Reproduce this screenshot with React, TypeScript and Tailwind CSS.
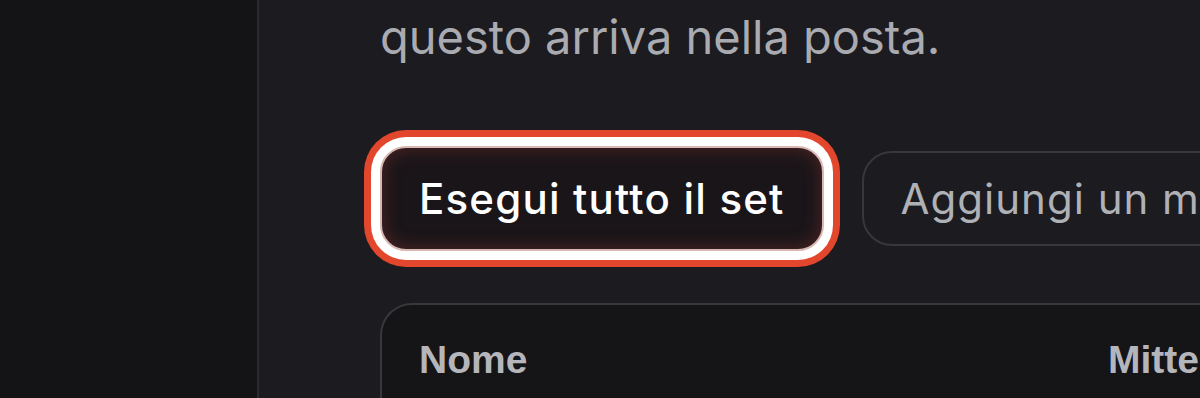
import React from 'react';

const App: React.FC = () => {
  return (
    <div className="flex h-[398px] w-[1200px] overflow-hidden bg-[#1c1b20] font-['Inter',sans-serif]">
      {/* Sidebar */}
      <aside className="w-[259px] shrink-0 border-r-2 border-[#2b2a2f] bg-[#141316]" />

      {/* Main */}
      <main className="min-w-0 flex-1 pl-[121px]">
        <p className="pt-[9px] text-[47px] leading-[56px] whitespace-nowrap text-[#a9abb1]">
          questo arriva nella posta.
        </p>

        <div className="mt-[81px] flex items-center gap-[38px]">
          <button className="h-[105px] shrink-0 rounded-[26px] border-2 border-[#d9b8b4] bg-[#1a1519] px-[37px] text-[42px] font-medium tracking-[1.2px] whitespace-nowrap text-white shadow-[inset_0_0_18px_rgba(190,70,60,0.35),0_0_0_9px_#ffffff,0_0_0_16px_#e2462c]">
            Esegui tutto il set
          </button>
          <button className="h-[95px] shrink-0 rounded-[30px] border-2 border-[#38373c] bg-[#1c1b20] px-[37px] text-[42px] tracking-[1px] whitespace-nowrap text-[#aeb1b6]">
            Aggiungi un mittente
          </button>
        </div>

        <div className="mt-[52px] h-[200px] rounded-tl-[32px] border-t-2 border-l-2 border-[#38373c] bg-[#151417]">
          <div className="flex pt-[26px] pl-[37px] font-['Liberation_Sans',sans-serif] text-[39px] font-bold text-[#b4b6bb]">
            <span className="w-[689px] shrink-0">Nome</span>
            <span className="whitespace-nowrap">Mittente</span>
          </div>
        </div>
      </main>
    </div>
  );
};

export default App;
